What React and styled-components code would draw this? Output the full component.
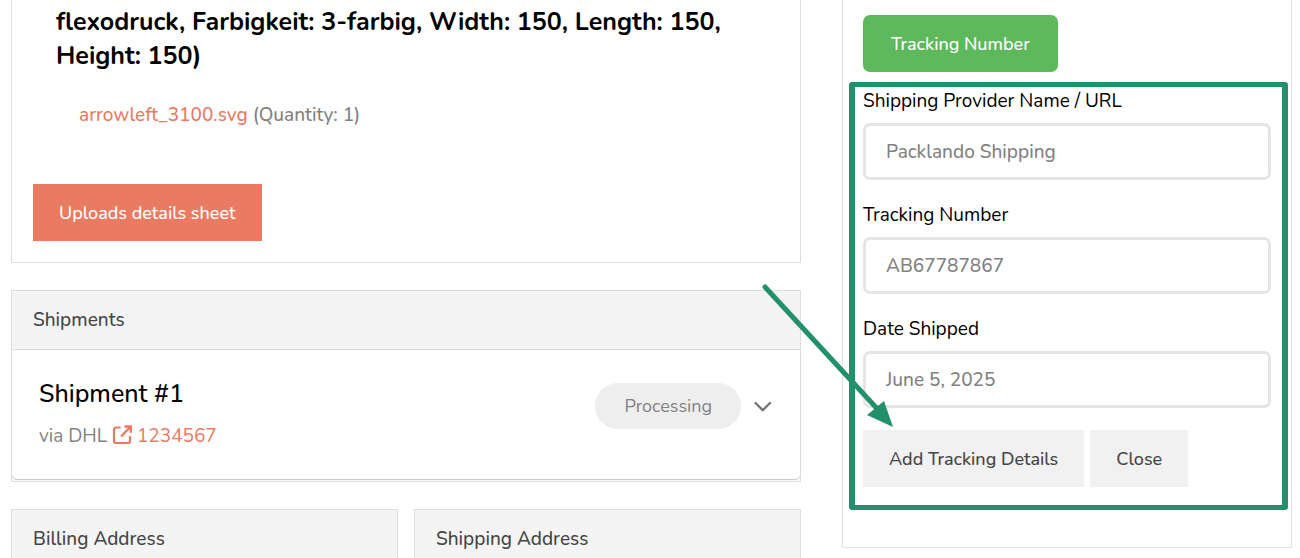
import React from "react";
import styled, { createGlobalStyle } from "styled-components";

const GlobalStyle = createGlobalStyle`
  * {
    box-sizing: border-box;
  }
  body {
    margin: 0;
    background: #fff;
    color: #000;
    font-family: Nunito, "Open Sans", "Noto Sans", sans-serif;
    font-size: 19px;
    line-height: 26px;
  }
  button,
  input {
    font: inherit;
  }
`;

const Page = styled.div`
  display: grid;
  grid-template-columns: minmax(0, 1fr) 450px;
  align-items: start;
  gap: 41px;
  padding: 0 8px 0 11px;
`;

const Main = styled.main`
  display: flex;
  flex-direction: column;
  gap: 27px;
`;

const Card = styled.section`
  border: 1px solid #dedede;
`;

const CardHeader = styled.h2`
  margin: 0;
  padding: 16px 21px;
  background: #f4f4f4;
  border-bottom: 1px solid #dedede;
  color: #454545;
  font-size: 19px;
  font-weight: 500;
`;

const ItemCard = styled(Card)`
  border-top: 0;
  padding: 5px 21px 21px;
`;

const ItemTitle = styled.h3`
  margin: 0 23px 29px;
  font-size: 25px;
  font-weight: 700;
  line-height: 34px;
`;

const FileLine = styled.p`
  margin: 0 46px 56px;
  color: #828282;
  font-weight: 500;
`;

const Link = styled.a`
  color: #eb7a62;
  text-decoration: none;
`;

const Button = styled.button`
  height: 57px;
  padding: 0 ${(props) => (props.$rounded ? "28px" : "26px")};
  border: 0;
  border-radius: ${(props) => (props.$rounded ? "7px" : "0")};
  background: ${(props) => props.$background || "#f1f1f1"};
  color: ${(props) => (props.$background ? "#fff" : "#454545")};
  font-size: 18px;
  font-weight: 500;
  cursor: pointer;
`;

const Shipment = styled.div`
  display: flex;
  justify-content: space-between;
  padding: 27px 27px 30px;
  border-radius: 0 0 5px 5px;
  box-shadow: 0 1px 1px #c4c4c4;
  margin-bottom: 2px;
`;

const ShipmentTitle = styled.h3`
  margin: 0 0 12px;
  font-size: 25px;
  font-weight: 500;
  line-height: 34px;
`;

const Carrier = styled.p`
  margin: 0;
  color: #828282;
`;

const LinkIcon = styled.svg`
  width: 20px;
  height: 20px;
  margin-right: 5px;
  vertical-align: -3px;
`;

const ShipmentState = styled.div`
  display: flex;
  align-items: center;
  gap: 12px;
  height: 58px;
`;

const Badge = styled.span`
  padding: 10px 29px;
  border-radius: 23px;
  background: #eee;
  color: #828282;
  font-size: 18px;
`;

const Toggle = styled.button`
  display: flex;
  padding: 0;
  border: 0;
  background: none;
  color: #757575;
  cursor: pointer;
`;

const Addresses = styled.div`
  display: grid;
  grid-template-columns: 1fr 1fr;
  gap: 16px;
`;

const Sidebar = styled.aside`
  border: 1px solid #e2e2e2;
  border-top: 0;
  padding: 15px 20px 37px;
`;

const TrackingForm = styled.form`
  position: relative;
  margin: 10px -17px 0 -14px;
  padding: 1px 11px 18px 8px;
  border: solid #22916b;
  border-width: 5px 6px;
  border-radius: 3px;
`;

const Field = styled.div`
  display: flex;
  flex-direction: column;
  gap: 9px;
  margin-bottom: 22px;
`;

const Input = styled.input`
  width: 100%;
  height: 57px;
  padding: 0 20px;
  border: 3px solid #e5e5e5;
  border-radius: 7px;
  background: #fff;
  color: #828282;
  font-weight: 500;
  outline: 0;
`;

const Actions = styled.div`
  display: flex;
  gap: 6px;
`;

// Lies over both columns and points at the submit button
const Pointer = styled.svg`
  position: absolute;
  top: 195px;
  left: -95px;
  width: 140px;
  height: 150px;
  pointer-events: none;
`;

const fields = [
  { id: "provider", label: "Shipping Provider Name / URL", value: "Packlando Shipping" },
  { id: "tracking", label: "Tracking Number", value: "AB67787867" },
  { id: "shipped", label: "Date Shipped", value: "June 5, 2025" }
];

const App = () => {
  return (
    <>
      <GlobalStyle />
      <Page>
        <Main>
          <ItemCard>
            <ItemTitle>
              flexodruck, Farbigkeit: 3-farbig, Width: 150, Length: 150, Height: 150)
            </ItemTitle>
            <FileLine>
              <Link href="#file">arrowleft_3100.svg</Link> (Quantity: 1)
            </FileLine>
            <Button type="button" $background="#eb7a62">
              Uploads details sheet
            </Button>
          </ItemCard>

          <Card>
            <CardHeader>Shipments</CardHeader>
            <Shipment>
              <div>
                <ShipmentTitle>Shipment #1</ShipmentTitle>
                <Carrier>
                  via DHL{" "}
                  <Link href="#shipment">
                    <LinkIcon viewBox="0 0 20 20" fill="none" aria-hidden="true">
                      <path
                        d="M8.500 2.500H4A2 2 0 0 0 2 4.500V16a2 2 0 0 0 2 2h12a2 2 0 0 0 2-2V11"
                        stroke="currentColor"
                        strokeWidth="2.200"
                      />
                      <path
                        d="M12.500 1.500h6.300v6.300M18.300 2L9 11.500"
                        stroke="currentColor"
                        strokeWidth="2.400"
                      />
                    </LinkIcon>
                    1234567
                  </Link>
                </Carrier>
              </div>
              <ShipmentState>
                <Badge>Processing</Badge>
                <Toggle type="button" aria-label="Toggle shipment">
                  <svg width="20" height="14" viewBox="0 0 20 14" fill="none">
                    <path
                      d="M2.500 4l7.200 7.200L17 4"
                      stroke="currentColor"
                      strokeWidth="2.400"
                      strokeLinecap="round"
                      strokeLinejoin="round"
                    />
                  </svg>
                </Toggle>
              </ShipmentState>
            </Shipment>
          </Card>

          <Addresses>
            <Card>
              <CardHeader>Billing Address</CardHeader>
            </Card>
            <Card>
              <CardHeader>Shipping Address</CardHeader>
            </Card>
          </Addresses>
        </Main>

        <Sidebar>
          <Button type="button" $background="#5eb85c" $rounded>
            Tracking Number
          </Button>
          <TrackingForm>
            {fields.map(({ id, label, value }) => (
              <Field key={id}>
                <label htmlFor={id}>{label}</label>
                <Input id={id} type="text" defaultValue={value} />
              </Field>
            ))}
            <Actions>
              <Button type="button">Add Tracking Details</Button>
              <Button type="button">Close</Button>
            </Actions>
            <Pointer viewBox="0 0 140 150" aria-hidden="true">
              <path d="M5 5L122 132" stroke="#22916b" strokeWidth="5" strokeLinecap="round" />
              <path d="M133 145L107 133L124 119Z" fill="#22916b" />
            </Pointer>
          </TrackingForm>
        </Sidebar>
      </Page>
    </>
  );
};

export default App;
